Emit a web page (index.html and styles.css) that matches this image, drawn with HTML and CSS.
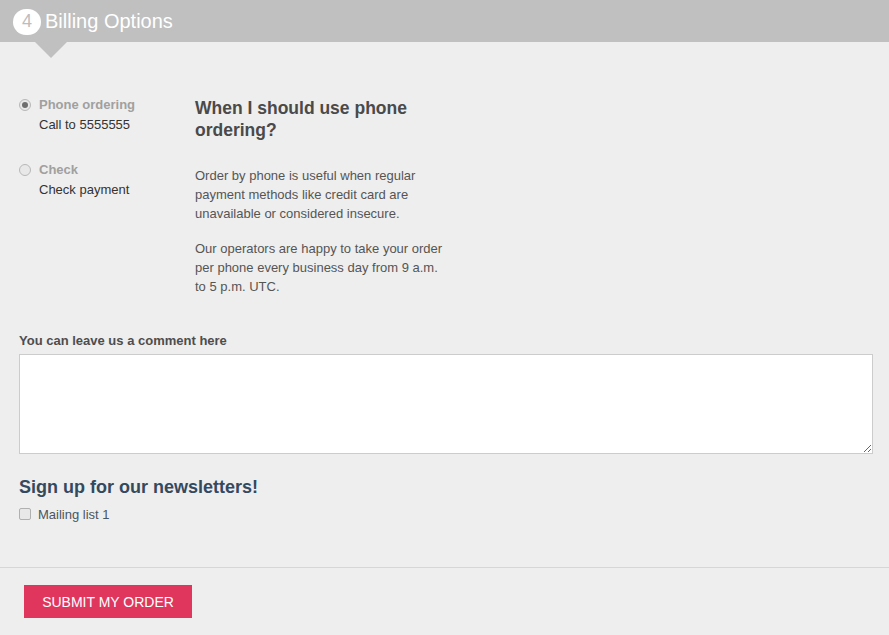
FILE: index.html
```html
<!DOCTYPE html>
<html>
<head>
<meta charset="utf-8">
<link rel="stylesheet" href="styles.css">
</head>
<body>
<div class="step-header">
  <span class="step-num">4</span>
  <span class="step-title">Billing Options</span>
  <span class="step-arrow"></span>
</div>
<div class="content">
  <div class="billing">
    <div class="options">
      <label class="option">
        <span class="radio checked"></span>
        <span class="option-text">
          <span class="option-name">Phone ordering</span>
          <span class="option-desc">Call to 5555555</span>
        </span>
      </label>
      <label class="option">
        <span class="radio"></span>
        <span class="option-text">
          <span class="option-name">Check</span>
          <span class="option-desc">Check payment</span>
        </span>
      </label>
    </div>
    <div class="info">
      <h3 class="info-title">When I should use phone ordering?</h3>
      <p>Order by phone is useful when regular payment methods like credit card are unavailable or considered insecure.</p>
      <p>Our operators are happy to take your order per phone every business day from 9 a.m. to 5 p.m. UTC.</p>
    </div>
  </div>
  <div class="comment">
    <label class="comment-label">You can leave us a comment here</label>
    <textarea class="comment-box"></textarea>
  </div>
  <div class="newsletter">
    <h3 class="newsletter-title">Sign up for our newsletters!</h3>
    <label class="check-row"><span class="checkbox"></span><span>Mailing list 1</span></label>
  </div>
</div>
<div class="footer">
  <button class="submit">SUBMIT MY ORDER</button>
</div>
</body>
</html>
```
FILE: styles.css
```css
* { box-sizing: border-box; }
html, body { margin: 0; padding: 0; }
body {
  background: #eeeeee;
  font-family: "Liberation Sans", Arial, sans-serif;
  color: #333;
  font-size: 13px;
}
.step-header {
  position: relative;
  height: 42px;
  background: #c0c0c0;
  display: flex;
  align-items: center;
  padding-left: 13px;
  gap: 4px;
}
.step-num {
  width: 28px;
  height: 26px;
  border-radius: 13px;
  background: #fff;
  color: #bdbdbd;
  font-size: 18px;
  display: flex;
  align-items: center;
  justify-content: center;
  margin-top: 1px;
}
.step-title {
  color: #fff;
  font-size: 20px;
}
.step-arrow {
  position: absolute;
  left: 35px;
  top: 42px;
  width: 0;
  height: 0;
  border-left: 16px solid transparent;
  border-right: 16px solid transparent;
  border-top: 16px solid #c0c0c0;
}
.content {
  padding: 53px 16px 0 19px;
}
.billing {
  display: flex;
}
.options {
  width: 176px;
  display: flex;
  flex-direction: column;
  gap: 25px;
}
.option {
  display: flex;
  gap: 8px;
}
.radio {
  width: 12px;
  height: 12px;
  border-radius: 50%;
  border: 1px solid #b8b8b8;
  background: #e8e8e8;
  margin-top: 4px;
  display: flex;
  align-items: center;
  justify-content: center;
  flex: none;
}
.radio.checked::after {
  content: "";
  width: 6px;
  height: 6px;
  border-radius: 50%;
  background: #6e6e6e;
}
.option-text {
  display: flex;
  flex-direction: column;
  line-height: 20px;
}
.option-name {
  color: #a0a0a0;
  font-weight: bold;
}
.option-desc {
  color: #333;
}
.info {
  width: 255px;
  color: #555;
  line-height: 19px;
}
.info-title {
  margin: 2px 0 25px 0;
  font-size: 17.5px;
  line-height: 22px;
  color: #4a4a4a;
  font-weight: bold;
}
.info p {
  margin: 0 0 16px 0;
}
.comment {
  margin-top: 19px;
  display: flex;
  flex-direction: column;
}
.comment-label {
  font-weight: bold;
  color: #4d4d4d;
  line-height: 19px;
  margin-bottom: 4px;
}
.comment-box {
  width: 854px;
  height: 100px;
  border: 1px solid #cccccc;
  background: #fff;
  margin: 0;
  resize: vertical;
  display: block;
}
.newsletter {
  padding-top: 22px;
  padding-bottom: 42px;
}
.newsletter-title {
  margin: 0 0 7px 0;
  font-size: 18px;
  line-height: 22px;
  color: #34495e;
}
.check-row {
  display: flex;
  align-items: center;
  gap: 7px;
  line-height: 20px;
  color: #4a5560;
}
.checkbox {
  width: 12px;
  height: 12px;
  border: 1px solid #b0b0b0;
  border-radius: 2px;
  background: #e8e8e8;
  margin-top: -2px;
}
.footer {
  border-top: 1px solid #d6d6d6;
  padding: 17px 24px 17px 24px;
}
.submit {
  background: #e0365e;
  color: #fff;
  border: none;
  font-family: "Liberation Sans", Arial, sans-serif;
  font-size: 14px;
  height: 33px;
  width: 168px;
  padding: 0;
  cursor: pointer;
}
```
